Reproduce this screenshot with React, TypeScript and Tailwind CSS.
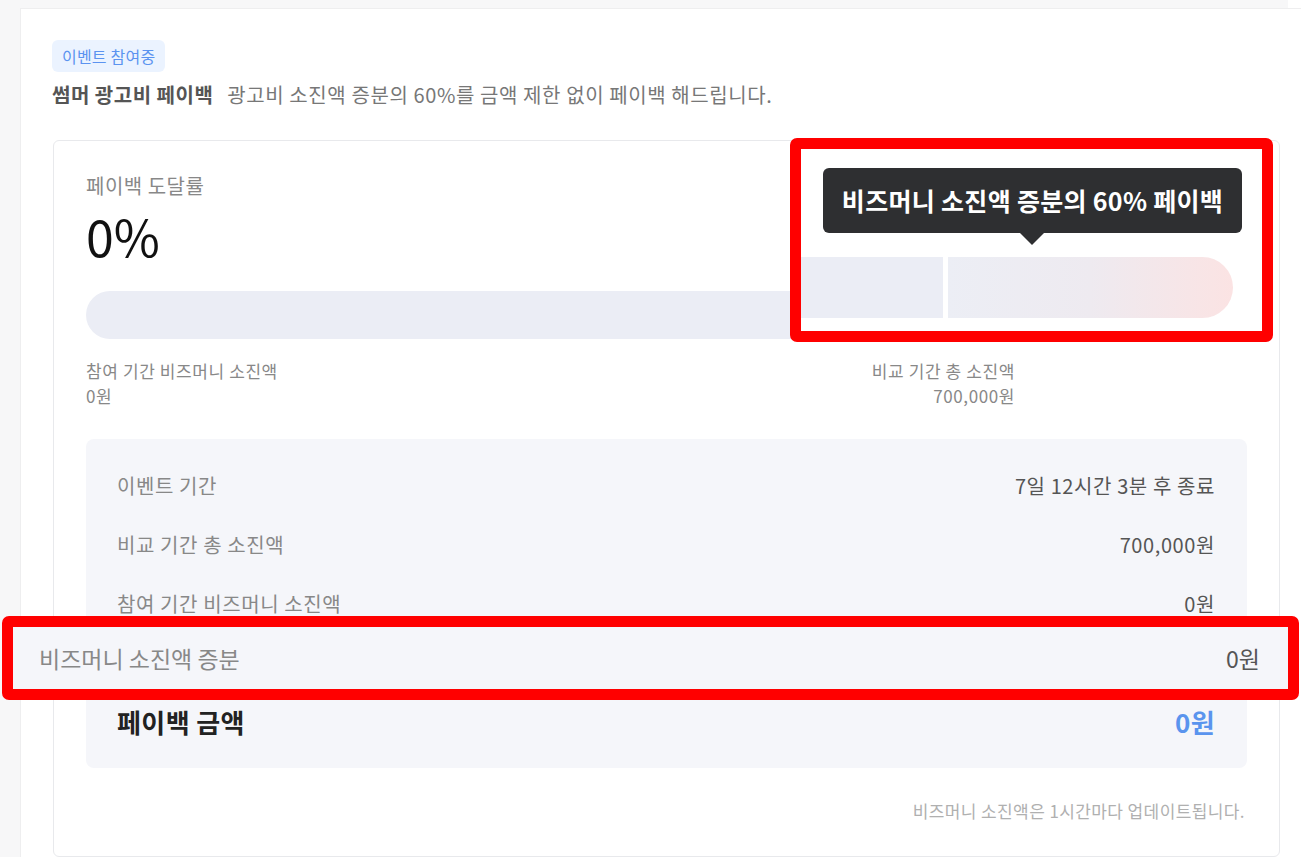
import React from 'react'

const font = { fontFamily: '"Noto Sans CJK KR", "Noto Sans", sans-serif' }

const rows = [
  { label: '이벤트 기간', value: '7일 12시간 3분 후 종료' },
  { label: '비교 기간 총 소진액', value: '700,000원' },
  { label: '참여 기간 비즈머니 소진액', value: '0원' },
]

function Tooltip() {
  return (
    <div className="absolute left-[22px] top-[19px] w-[419px]">
      <div className="flex h-[65px] items-center justify-center rounded-[6px] bg-[#2e2f31] text-[25px] font-bold tracking-[0.3px] text-white">
        비즈머니 소진액 증분의 60% 페이백
      </div>
      <div className="ml-[197px] h-0 w-0 border-x-[12px] border-t-[12px] border-x-transparent border-t-[#2e2f31]" />
    </div>
  )
}

export default function App() {
  return (
    <div className="relative h-[865px] w-[1301px] overflow-hidden bg-white" style={font}>
      <div className="flex">
        <div className="w-[20px] shrink-0 bg-[#f7f7f8]" />
        <div className="flex-1">
          <div className="h-[8px] w-[1268px] bg-[#f7f7f8]" />
          <div className="border-l border-t border-[#eeeeef] pl-[31px] pr-[21px] pt-[31px]">
            <span className="inline-flex h-[32px] items-center rounded-[6px] bg-[#ebf3ff] px-[10px] text-[16px] tracking-[0.2px] text-[#5b93f0]">
              이벤트 참여중
            </span>
            <div className="mt-[10px] flex items-center text-[20px] leading-[26px]">
              <span className="font-bold tracking-[0.5px] text-[#555]">썸머 광고비 페이백</span>
              <span className="ml-[14px] tracking-[0.6px] text-[#777]">광고비 소진액 증분의 60%를 금액 제한 없이 페이백 해드립니다.</span>
            </div>

            <div className="ml-px mt-[32px] rounded-[6px] border border-[#e8e9ec] px-[32px] pt-[32px]">
              <div className="text-[20px] leading-[26px] tracking-[0.5px] text-[#888]">페이백 도달률</div>
              <div className="mt-[6px] text-[50px] leading-[60px] text-[#111]">0%</div>

              <div className="mr-[14px] mt-[26px] flex h-[48px] overflow-hidden rounded-full">
                <div className="w-[857px] bg-[#ebedf5]" />
                <div className="w-[5px] bg-white" />
                <div className="flex-1 bg-gradient-to-r from-[#eceef5] to-[#fae3e3]" />
              </div>

              <div className="mt-[19px] flex justify-between text-[17px] leading-[25px] tracking-[0.6px] text-[#888]">
                <div>
                  <div>참여 기간 비즈머니 소진액</div>
                  <div>0원</div>
                </div>
                <div className="mr-[232px] text-right">
                  <div>비교 기간 총 소진액</div>
                  <div>700,000원</div>
                </div>
              </div>

              <div className="mt-[31px] rounded-[8px] bg-[#f5f6fa] py-[17px] pl-[31px] pr-[32px]">
                {rows.map((r) => (
                  <div key={r.label} className="flex h-[59px] items-center justify-between text-[20px] tracking-[0.6px]">
                    <span className="text-[#888]">{r.label}</span>
                    <span className="text-[#555]">{r.value}</span>
                  </div>
                ))}
                {/* row shown in the callout below */}
                <div className="h-[59px]" />
                <div className="flex h-[59px] items-center justify-between text-[26px] font-bold tracking-[0.4px]">
                  <span className="text-[#222]">페이백 금액</span>
                  <span className="text-[#5a94ee]">0원</span>
                </div>
              </div>

              <div className="mr-[2px] mt-[32px] pb-[34px] text-right text-[17px] leading-[22px] tracking-[0.4px] text-[#b0b0b0]">
                비즈머니 소진액은 1시간마다 업데이트됩니다.
              </div>
            </div>
          </div>
        </div>
      </div>

      {/* magnified callout: tooltip + bar */}
      <div className="absolute left-[790px] top-[138px] h-[204px] w-[483px] rounded-[7px] border-[11px] border-[#ff0000] bg-white">
        <div className="relative h-full w-full overflow-hidden">
          <Tooltip />
          <div className="absolute left-0 top-[108px] flex h-[61px] w-[432px]">
            <div className="w-[142px] bg-[#ebedf5]" />
            <div className="w-[5px] bg-white" />
            <div className="flex-1 rounded-r-full bg-gradient-to-r from-[#eceef5] via-[#eeeaf0] to-[#fbe3e3]" />
          </div>
        </div>
      </div>

      {/* magnified callout: increment row */}
      <div className="absolute left-[2px] top-[616px] h-[84px] w-[1297px] rounded-[7px] border-[11px] border-[#ff0000] bg-[#f5f6fa]">
        <div className="flex h-full items-center justify-between pl-[26px] pr-[28px] text-[23px]">
          <span className="text-[#888]">비즈머니 소진액 증분</span>
          <span className="text-[#555]">0원</span>
        </div>
      </div>
    </div>
  )
}
